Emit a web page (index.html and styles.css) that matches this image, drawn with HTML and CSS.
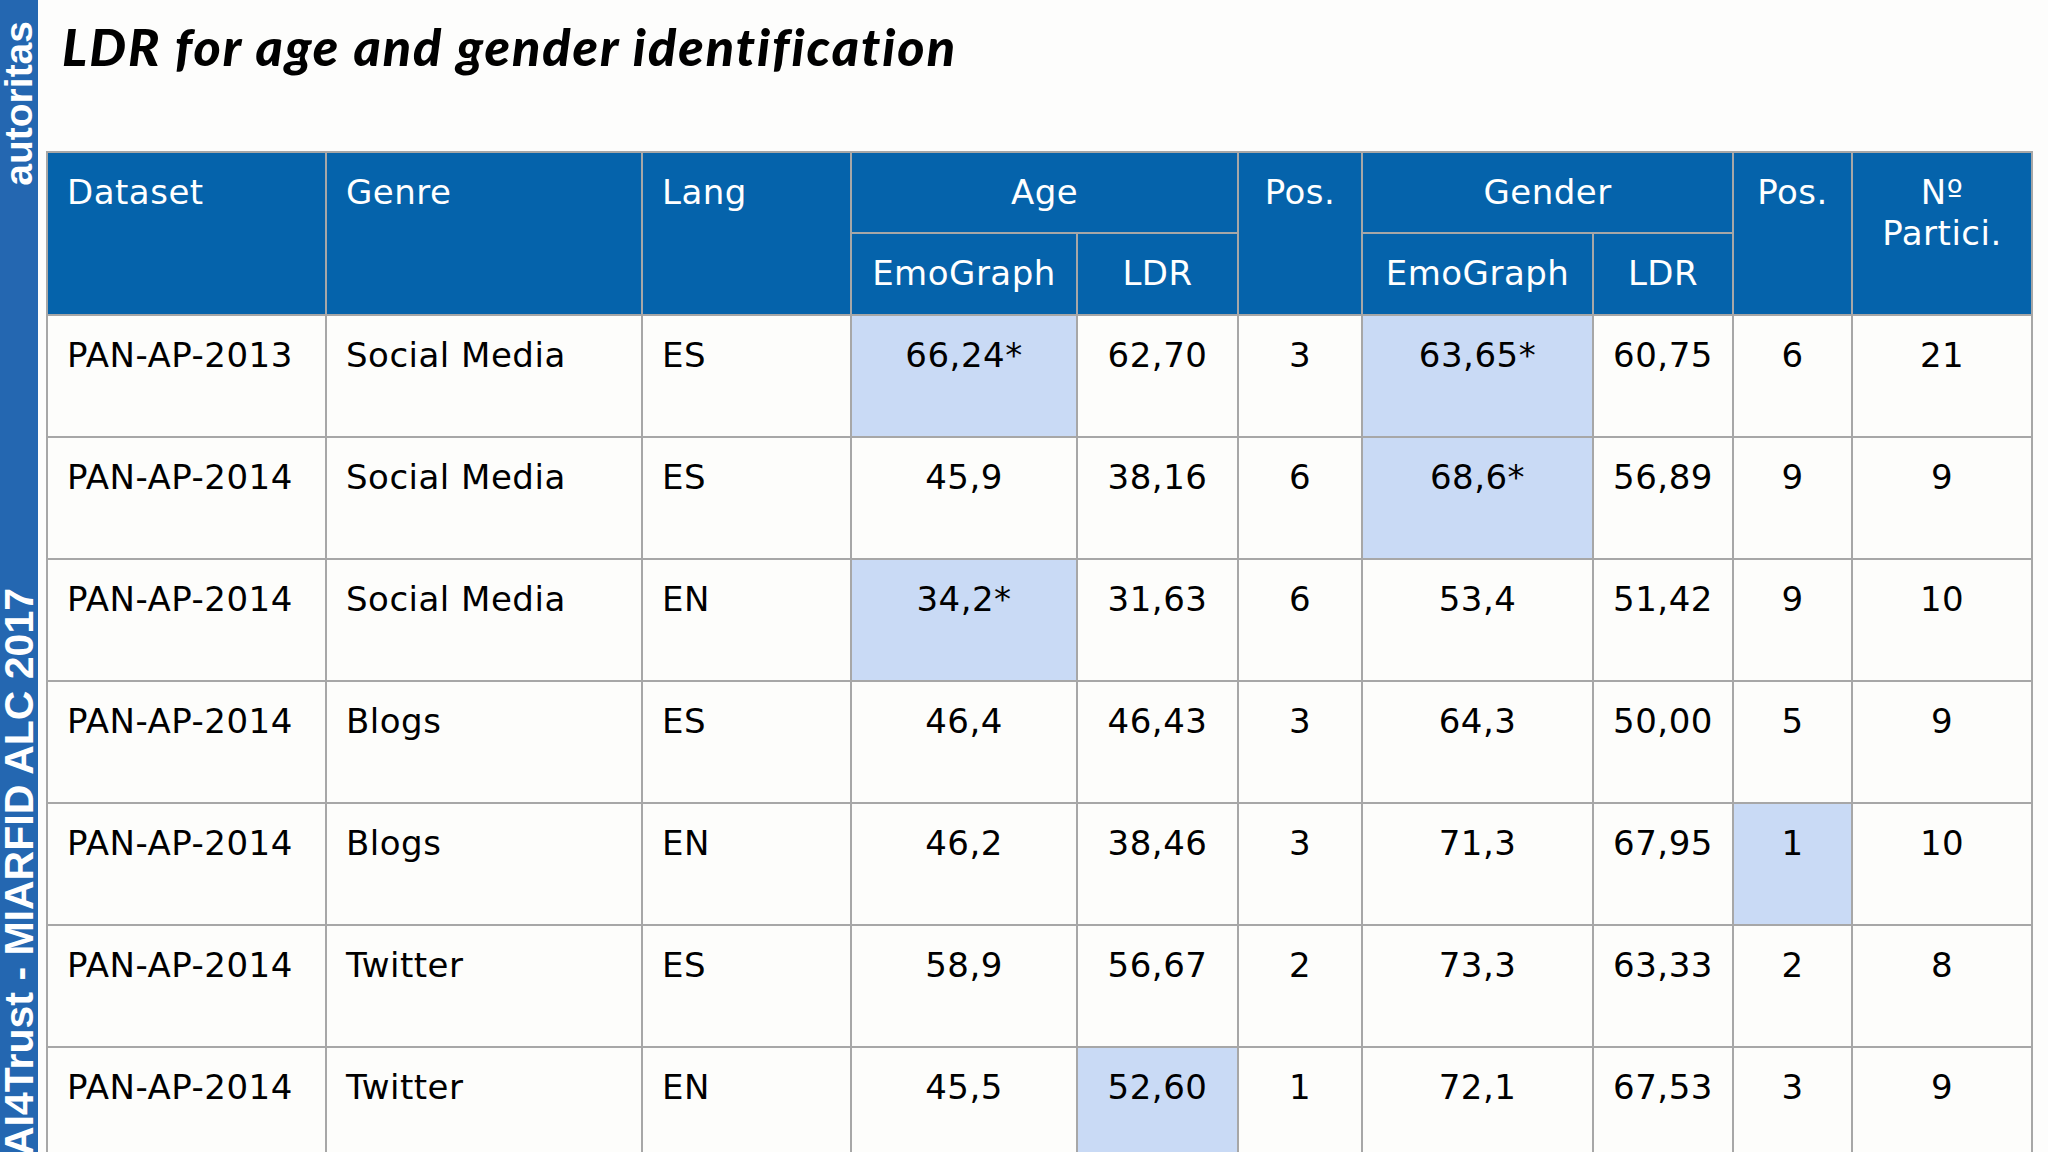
FILE: index.html
```html
<!DOCTYPE html>
<html lang="en">
<head>
<meta charset="utf-8">
<title>LDR for age and gender identification</title>
<link rel="stylesheet" href="styles.css">
</head>
<body>
<div class="page">
  <aside class="sidebar">
    <span class="side-text side-top">autoritas</span>
    <span class="side-text side-bottom">AI4Trust - MIARFID ALC 2017</span>
  </aside>
  <main class="main">
    <h1 class="title">LDR for age and gender identification</h1>
    <table class="results">
      <colgroup>
        <col class="c-dataset">
        <col class="c-genre">
        <col class="c-lang">
        <col class="c-emo1">
        <col class="c-ldr1">
        <col class="c-pos1">
        <col class="c-emo2">
        <col class="c-ldr2">
        <col class="c-pos2">
        <col class="c-part">
      </colgroup>
      <thead>
        <tr class="h1">
          <th rowspan="2" class="left">Dataset</th>
          <th rowspan="2" class="left">Genre</th>
          <th rowspan="2" class="left">Lang</th>
          <th colspan="2">Age</th>
          <th rowspan="2">Pos.</th>
          <th colspan="2">Gender</th>
          <th rowspan="2">Pos.</th>
          <th rowspan="2">Nº<br>Partici.</th>
        </tr>
        <tr class="h2">
          <th>EmoGraph</th>
          <th>LDR</th>
          <th>EmoGraph</th>
          <th>LDR</th>
        </tr>
      </thead>
      <tbody>
        <tr>
          <td class="left">PAN-AP-2013</td><td class="left">Social Media</td><td class="left">ES</td>
          <td class="hl">66,24*</td><td>62,70</td><td>3</td><td class="hl">63,65*</td><td>60,75</td><td>6</td><td>21</td>
        </tr>
        <tr>
          <td class="left">PAN-AP-2014</td><td class="left">Social Media</td><td class="left">ES</td>
          <td>45,9</td><td>38,16</td><td>6</td><td class="hl">68,6*</td><td>56,89</td><td>9</td><td>9</td>
        </tr>
        <tr>
          <td class="left">PAN-AP-2014</td><td class="left">Social Media</td><td class="left">EN</td>
          <td class="hl">34,2*</td><td>31,63</td><td>6</td><td>53,4</td><td>51,42</td><td>9</td><td>10</td>
        </tr>
        <tr>
          <td class="left">PAN-AP-2014</td><td class="left">Blogs</td><td class="left">ES</td>
          <td>46,4</td><td>46,43</td><td>3</td><td>64,3</td><td>50,00</td><td>5</td><td>9</td>
        </tr>
        <tr>
          <td class="left">PAN-AP-2014</td><td class="left">Blogs</td><td class="left">EN</td>
          <td>46,2</td><td>38,46</td><td>3</td><td>71,3</td><td>67,95</td><td class="hl">1</td><td>10</td>
        </tr>
        <tr>
          <td class="left">PAN-AP-2014</td><td class="left">Twitter</td><td class="left">ES</td>
          <td>58,9</td><td>56,67</td><td>2</td><td>73,3</td><td>63,33</td><td>2</td><td>8</td>
        </tr>
        <tr>
          <td class="left">PAN-AP-2014</td><td class="left">Twitter</td><td class="left">EN</td>
          <td>45,5</td><td class="hl">52,60</td><td>1</td><td>72,1</td><td>67,53</td><td>3</td><td>9</td>
        </tr>
      </tbody>
    </table>
  </main>
</div>
</body>
</html>
```
FILE: styles.css
```css
html, body {
  margin: 0;
  padding: 0;
  background: #fdfdfc;
}

.page {
  display: flex;
  width: 2048px;
  height: 1152px;
  overflow: hidden;
}

.sidebar {
  flex: 0 0 38px;
  width: 38px;
  background: #2467b1;
  display: flex;
  flex-direction: column;
  align-items: center;
  overflow: hidden;
}

.side-text {
  writing-mode: vertical-rl;
  transform: rotate(180deg);
  font-family: "Liberation Sans", Arial, sans-serif;
  font-weight: 700;
  line-height: 38px;
  color: #ffffff;
  white-space: nowrap;
}

.side-top {
  font-size: 39px;
  margin-top: 21px;
}

.side-bottom {
  font-size: 41px;
  margin-top: auto;
  margin-bottom: -4px;
}

.main {
  flex: 1 1 auto;
  display: flex;
  flex-direction: column;
  align-items: flex-start;
  padding-left: 8px;
}

.title {
  margin: 20px 0 0 16px;
  font-family: "Lato", "Open Sans", sans-serif;
  font-style: italic;
  font-weight: 900;
  font-size: 52px;
  line-height: 52px;
  letter-spacing: 2px;
  color: #000000;
}

.results {
  margin-top: 79px;
  border-collapse: collapse;
  table-layout: fixed;
  width: 1985px;
  font-family: "DejaVu Sans", Verdana, sans-serif;
  font-size: 34px;
  line-height: 41px;
  letter-spacing: 0.5px;
}

.c-dataset { width: 279px; }
.c-genre { width: 316px; }
.c-lang { width: 209px; }
.c-emo1 { width: 226px; }
.c-ldr1 { width: 161px; }
.c-pos1 { width: 124px; }
.c-emo2 { width: 231px; }
.c-ldr2 { width: 140px; }
.c-pos2 { width: 119px; }
.c-part { width: 180px; }

.results th,
.results td {
  border: 2px solid #a7a7a7;
  vertical-align: top;
  text-align: center;
  padding: 19px 4px 0;
  white-space: nowrap;
}

.results th {
  background: #0563ab;
  color: #ffffff;
  font-weight: 400;
}

.results .left {
  text-align: left;
  padding-left: 19px;
}

.h1 { height: 81px; }
.h2 { height: 82px; }

.results tbody tr { height: 122px; }

.results td {
  background: #fdfdfb;
  color: #000000;
}

.results td.hl {
  background: #c9daf5;
}
```
